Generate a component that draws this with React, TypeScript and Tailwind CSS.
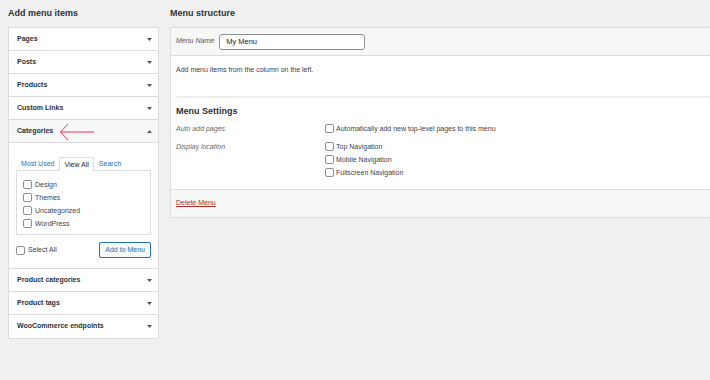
import React from 'react';

const font = { fontFamily: '"Liberation Sans", Arial, sans-serif' };

const Caret = ({ up = false }: { up?: boolean }) => (
  <svg width="5" height="3" viewBox="0 0 5 3" className="shrink-0">
    {up ? <path d="M0 3 L2.5 0 L5 3 Z" fill="#50575e" /> : <path d="M0 0 L5 0 L2.5 3 Z" fill="#50575e" />}
  </svg>
);

const Box = () => (
  <span className="inline-block w-[9px] h-[9px] shrink-0 rounded-[2px] border border-[#8c8f94] bg-white" />
);

const SectionRow = ({ title, last = false }: { title: string; last?: boolean }) => (
  <div
    className={`flex items-center justify-between h-[23px] pl-2 pr-[6px] bg-white ${last ? '' : 'border-b border-[#dcdcde]'}`}
  >
    <span className="text-[7px] font-bold text-[#2c3338]">{title}</span>
    <Caret />
  </div>
);

const categories = ['Design', 'Themes', 'Uncategorized', 'WordPress'];

export default function App() {
  return (
    <div className="w-[710px] h-[380px] overflow-hidden bg-[#f0f0f1] flex gap-[11px] pl-2 text-[#1d2327]" style={font}>
      {/* left column */}
      <div className="w-[151px] shrink-0 flex flex-col">
        <h2 className="h-[27px] flex items-center text-[9px] font-bold text-[#2c3338]">Add menu items</h2>
        <div className="border border-[#dcdcde] bg-white flex flex-col">
          <SectionRow title="Pages" />
          <SectionRow title="Posts" />
          <SectionRow title="Products" />
          <SectionRow title="Custom Links" />

          {/* expanded categories */}
          <div className="border-b border-[#dcdcde]">
            <div className="relative flex items-center justify-between h-[23px] pl-2 pr-[6px] bg-[#f6f7f7] border-b border-[#dcdcde]">
              <span className="text-[7px] font-bold text-[#2c3338]">Categories</span>
              <svg width="36" height="22" viewBox="0 0 36 22" className="absolute left-[50px] top-[1px]">
                <path d="M1.5 11 H35 M9 3 L1.5 11 L9 19" stroke="#e8335b" strokeWidth="1" fill="none" />
              </svg>
              <Caret up />
            </div>
            <div className="px-[7px] pt-[14px] pb-[10px]">
              <div className="flex items-end text-[7px] leading-[9px] pl-[5px] gap-[5px]">
                <span className="text-[#2271b1] pb-[2px]">Most Used</span>
                <span className="px-[4px] pt-[2px] pb-[2px] border border-b-0 border-[#dcdcde] bg-white -mb-px relative">View All</span>
                <span className="text-[#2271b1] pb-[2px]">Search</span>
              </div>
              <div className="border border-[#dcdcde] h-[65px] pl-[6px] pt-[7px] flex flex-col">
                {categories.map((c) => (
                  <label key={c} className="flex items-center gap-[3px] text-[7px] leading-[13px] text-[#3c434a]">
                    <Box />
                    {c}
                  </label>
                ))}
              </div>
              <div className="flex items-center justify-between mt-[7px]">
                <label className="flex items-center gap-[3px] text-[7px] text-[#3c434a]">
                  <Box />
                  Select All
                </label>
                <span className="h-[16px] px-[5px] flex items-center border border-[#2271b1] rounded-[2px] bg-[#f6f7f7] text-[7px] text-[#2271b1]">
                  Add to Menu
                </span>
              </div>
            </div>
          </div>

          <SectionRow title="Product categories" />
          <SectionRow title="Product tags" />
          <SectionRow title="WooCommerce endpoints" last />
        </div>
      </div>

      {/* right column */}
      <div className="w-[560px] shrink-0 flex flex-col">
        <h2 className="h-[27px] flex items-center text-[9px] font-bold text-[#2c3338]">Menu structure</h2>
        <div className="border border-[#dcdcde] bg-white">
          <div className="h-[28px] flex items-center gap-[5px] pl-[5px] bg-[#f6f7f7] border-b border-[#dcdcde]">
            <span className="text-[7px] italic text-[#50575e]">Menu Name</span>
            <div className="w-[146px] h-[16px] flex items-center pl-[6px] bg-white border border-[#8c8f94] rounded-[3px] text-[7.5px]">
              My Menu
            </div>
          </div>
          <div className="px-[5px]">
            <p className="text-[7px] leading-[13px] text-[#3c434a] pt-[7px] h-[40px]">Add menu items from the column on the left.</p>
            <div className="border-t-2 border-[#f0f0f1]" />
            <h3 className="text-[9px] leading-[13px] font-bold mt-[7px] text-[#2c3338]">Menu Settings</h3>
            <div className="flex text-[7px] leading-[13px] mt-[4px]">
              <span className="w-[149px] italic text-[#646970]">Auto add pages</span>
              <label className="flex items-center gap-[2px] text-[#3c434a]">
                <Box />
                Automatically add new top-level pages to this menu
              </label>
            </div>
            <div className="flex text-[7px] leading-[13px] mt-[5px] pb-[10px]">
              <span className="w-[149px] italic text-[#646970]">Display location</span>
              <div className="flex flex-col text-[#3c434a]">
                {['Top Navigation', 'Mobile Navigation', 'Fullscreen Navigation'].map((n) => (
                  <label key={n} className="flex items-center gap-[2px]">
                    <Box />
                    {n}
                  </label>
                ))}
              </div>
            </div>
          </div>
          <div className="h-[28px] flex items-center pl-[5px] bg-[#f6f7f7] border-t border-[#dcdcde]">
            <span className="text-[7px] text-[#b32d2e] underline">Delete Menu</span>
          </div>
        </div>
      </div>
    </div>
  );
}
